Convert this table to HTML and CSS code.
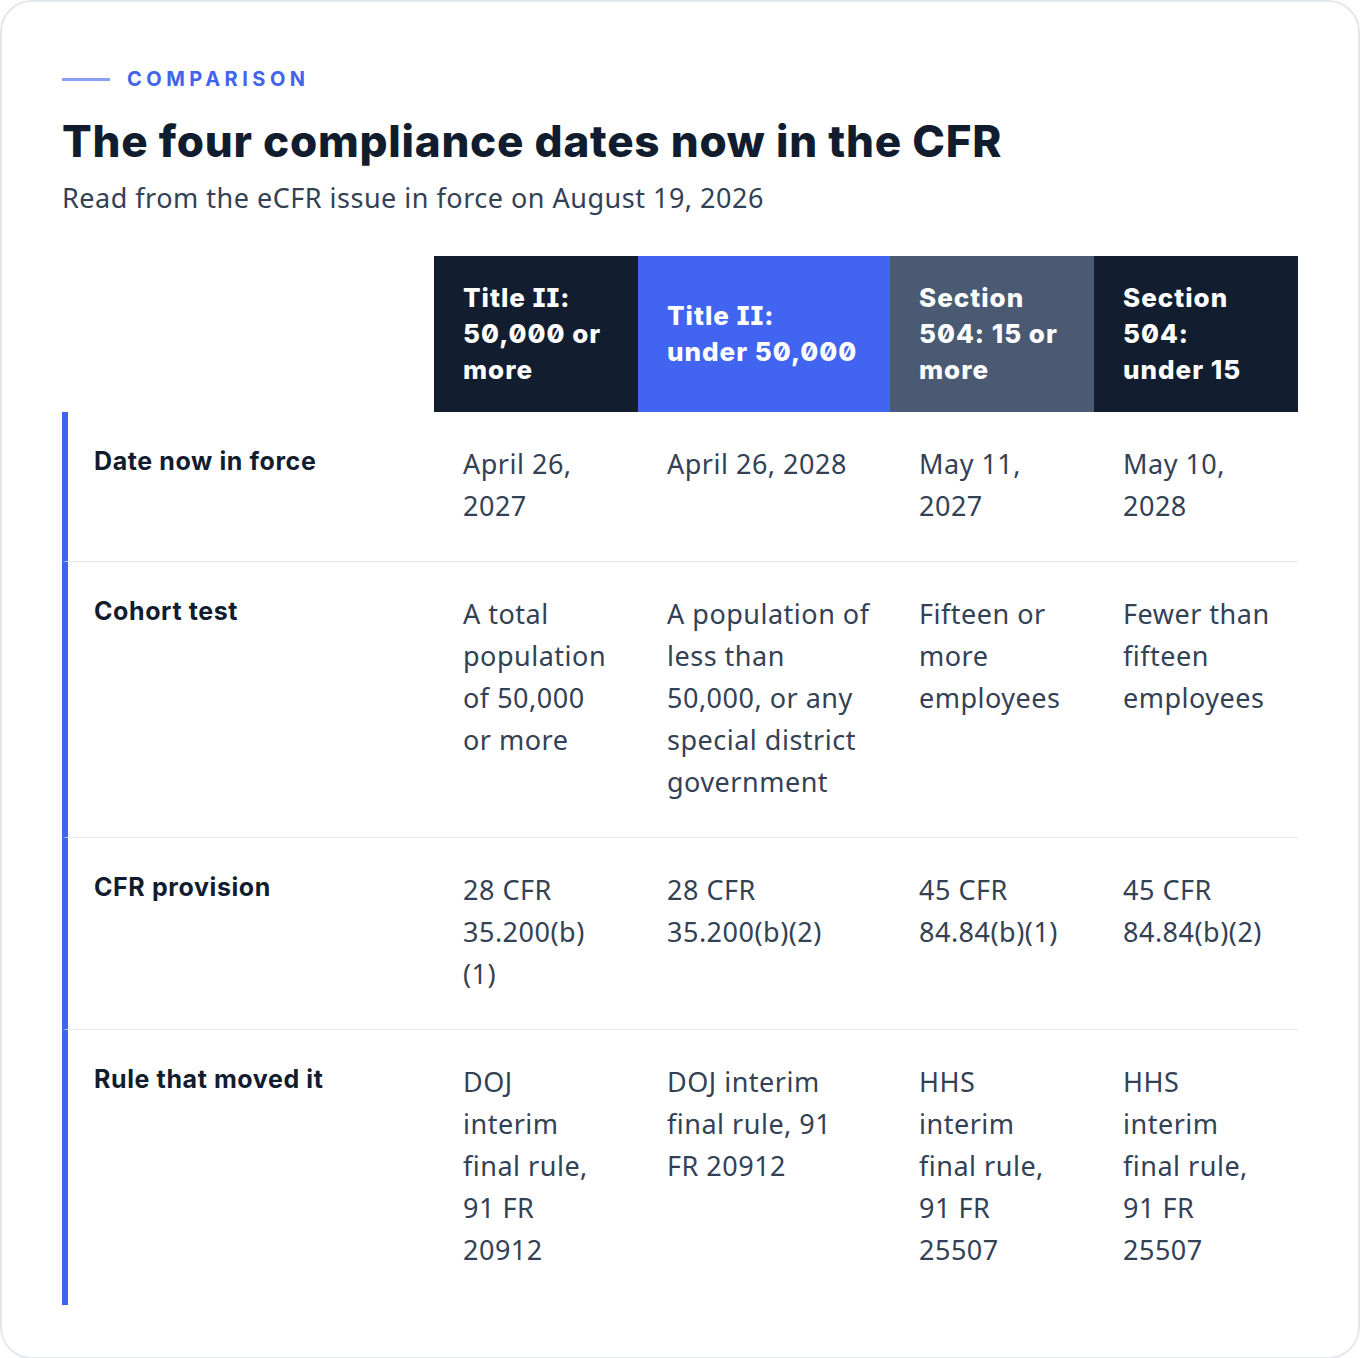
FILE: index.html
```html
<!DOCTYPE html>
<html lang="en">
<head>
<meta charset="utf-8">
<title>Comparison</title>
<link rel="stylesheet" href="styles.css">
</head>
<body>
<main class="card">
  <div class="eyebrow"><span class="eyebrow-line"></span><span class="eyebrow-text">COMPARISON</span></div>
  <h1 class="title">The four compliance dates now in the CFR</h1>
  <p class="subtitle">Read from the eCFR issue in force on August 19, 2026</p>
  <table class="cmp">
    <colgroup>
      <col class="col-label">
      <col class="col-narrow">
      <col class="col-wide">
      <col class="col-narrow">
      <col class="col-narrow">
    </colgroup>
    <thead>
      <tr>
        <td class="corner"></td>
        <th class="head head-dark">Title II: 50,000 or more</th>
        <th class="head head-blue">Title II: under 50,000</th>
        <th class="head head-slate">Section 504: 15 or more</th>
        <th class="head head-dark">Section 504: under 15</th>
      </tr>
    </thead>
    <tbody>
      <tr>
        <th class="rowlabel">Date now in force</th>
        <td>April 26, 2027</td>
        <td class="wide">April 26, 2028</td>
        <td>May 11, 2027</td>
        <td>May 10, 2028</td>
      </tr>
      <tr>
        <th class="rowlabel">Cohort test</th>
        <td>A total population of 50,000 or more</td>
        <td class="wide">A population of less than 50,000, or any special district government</td>
        <td>Fifteen or more employees</td>
        <td>Fewer than fifteen employees</td>
      </tr>
      <tr>
        <th class="rowlabel">CFR provision</th>
        <td>28 CFR 35.200(b)(1)</td>
        <td class="wide">28 CFR 35.200(b)(2)</td>
        <td>45 CFR 84.84(b)(1)</td>
        <td>45 CFR 84.84(b)(2)</td>
      </tr>
      <tr>
        <th class="rowlabel">Rule that moved it</th>
        <td>DOJ interim final rule, 91 FR 20912</td>
        <td class="wide">DOJ interim final rule, 91 FR&nbsp;20912</td>
        <td>HHS interim final rule, 91 FR 25507</td>
        <td>HHS interim final rule, 91 FR 25507</td>
      </tr>
    </tbody>
  </table>
</main>
</body>
</html>
```

FILE: styles.css
```css
* { box-sizing: border-box; }

html, body {
  margin: 0;
  padding: 0;
  background: #ffffff;
}

.card {
  width: 1360px;
  min-height: 1358px;
  border: 2px solid #e3e8ef;
  border-radius: 32px;
  padding: 65px 60px 52px;
  background: #ffffff;
  color: #111d2e;
}

.eyebrow {
  display: flex;
  align-items: center;
  gap: 17px;
  height: 24px;
}

.eyebrow-line {
  width: 48px;
  height: 3px;
  background: #89a0f6;
}

.eyebrow-text {
  font-family: "Inter", "Liberation Sans", sans-serif;
  font-weight: 700;
  font-size: 20px;
  line-height: 24px;
  letter-spacing: 4.5px;
  color: #4263eb;
}

.title {
  margin: 24px 0 0;
  font-family: "Inter", "Liberation Sans", sans-serif;
  font-weight: 800;
  font-size: 44px;
  line-height: 52px;
  letter-spacing: 0.75px;
  color: #111d2e;
}

.subtitle {
  margin: 13px 0 0;
  font-family: "Noto Sans", "Liberation Sans", sans-serif;
  font-size: 27px;
  line-height: 36px;
  letter-spacing: 0.5px;
  color: #334155;
}

.cmp {
  margin-top: 40px;
  width: 1236px;
  table-layout: fixed;
  border-collapse: separate;
  border-spacing: 0;
}

.col-label { width: 372px; }
.col-narrow { width: 204px; }
.col-wide { width: 252px; }

.corner { padding: 0; }

.head {
  height: 156px;
  padding: 24px 28px 24px 29px;
  text-align: left;
  vertical-align: middle;
  font-family: "Inter", "Liberation Sans", sans-serif;
  font-feature-settings: "zero" 1, "cv08" 1;
  font-weight: 800;
  font-size: 26px;
  line-height: 36px;
  letter-spacing: 1px;
  color: #ffffff;
}

.head-dark { background: #121e2f; }
.head-blue { background: #4165f0; }
.head-slate { background: #4a5a73; }

.rowlabel {
  border-left: 6px solid #4263eb;
  padding: 32px 24px 32px 26px;
  text-align: left;
  vertical-align: top;
  font-family: "Inter", "Liberation Sans", sans-serif;
  font-weight: 700;
  font-size: 25px;
  line-height: 34px;
  letter-spacing: 0.6px;
  color: #111d2e;
}

.cmp td:not(.corner) {
  padding: 31px 28px 34px 29px;
  vertical-align: top;
  font-family: "Noto Sans", "Liberation Sans", sans-serif;
  font-size: 27px;
  line-height: 42px;
  letter-spacing: 0.5px;
  color: #334155;
}

.cmp td.wide {
  padding-right: 17px;
}

.cmp tbody tr + tr > * {
  border-top: 1px solid #e3e8ef;
}
```
